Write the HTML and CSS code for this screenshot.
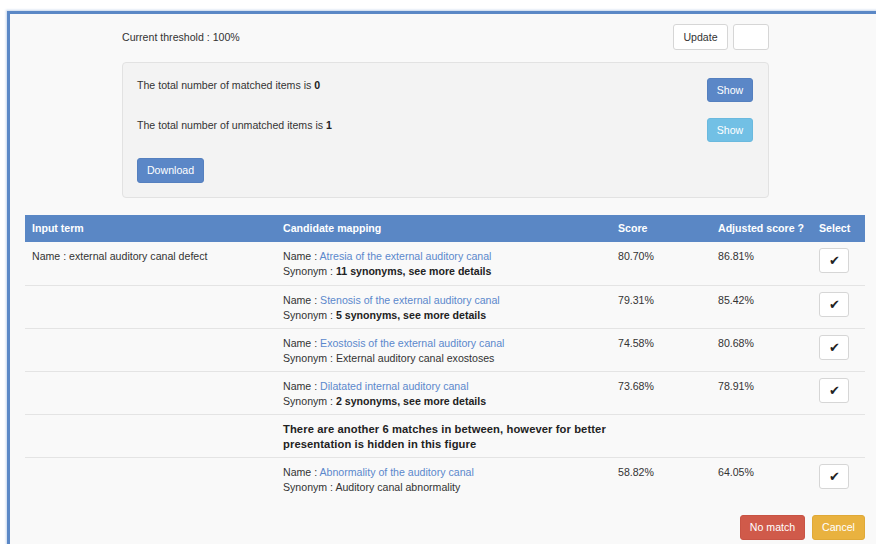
FILE: index.html
```html
<!DOCTYPE html>
<html>
<head>
<meta charset="utf-8">
<link rel="stylesheet" href="styles.css">
</head>
<body>
<div class="frame">
  <div class="top">
    <div class="threshold">
      <span>Current threshold : 100%</span>
      <div class="threshold-actions">
        <button class="btn btn-default btn-update">Update</button>
        <input class="threshold-input" type="text" value="">
      </div>
    </div>
    <div class="panel">
      <div class="panel-row">
        <span>The total number of matched items is <b>0</b></span>
        <button class="btn btn-primary btn-show">Show</button>
      </div>
      <div class="panel-row">
        <span>The total number of unmatched items is <b>1</b></span>
        <button class="btn btn-info btn-show">Show</button>
      </div>
      <div class="panel-row">
        <button class="btn btn-primary btn-download">Download</button>
      </div>
    </div>
  </div>

  <table class="results">
    <colgroup>
      <col class="c-input"><col class="c-cand"><col class="c-score"><col class="c-adj"><col class="c-sel">
    </colgroup>
    <thead>
      <tr><th>Input term</th><th>Candidate mapping</th><th>Score</th><th>Adjusted score ?</th><th>Select</th></tr>
    </thead>
    <tbody>
      <tr>
        <td>Name : external auditory canal defect</td>
        <td>Name : <a>Atresia of the external auditory canal</a><br>Synonym : <b>11 synonyms, see more details</b></td>
        <td>80.70%</td><td>86.81%</td>
        <td><button class="btn btn-default btn-check">&#10004;</button></td>
      </tr>
      <tr>
        <td></td>
        <td>Name : <a>Stenosis of the external auditory canal</a><br>Synonym : <b>5 synonyms, see more details</b></td>
        <td>79.31%</td><td>85.42%</td>
        <td><button class="btn btn-default btn-check">&#10004;</button></td>
      </tr>
      <tr>
        <td></td>
        <td>Name : <a>Exostosis of the external auditory canal</a><br>Synonym : External auditory canal exostoses</td>
        <td>74.58%</td><td>80.68%</td>
        <td><button class="btn btn-default btn-check">&#10004;</button></td>
      </tr>
      <tr>
        <td></td>
        <td>Name : <a>Dilatated internal auditory canal</a><br>Synonym : <b>2 synonyms, see more details</b></td>
        <td>73.68%</td><td>78.91%</td>
        <td><button class="btn btn-default btn-check">&#10004;</button></td>
      </tr>
      <tr class="note">
        <td></td>
        <td><b>There are another 6 matches in between, however for better<br>presentation is hidden in this figure</b></td>
        <td></td><td></td><td></td>
      </tr>
      <tr class="last">
        <td></td>
        <td>Name : <a>Abnormality of the auditory canal</a><br>Synonym : Auditory canal abnormality</td>
        <td>58.82%</td><td>64.05%</td>
        <td><button class="btn btn-default btn-check">&#10004;</button></td>
      </tr>
    </tbody>
  </table>

  <div class="footer">
    <button class="btn btn-danger">No match</button>
    <button class="btn btn-warning">Cancel</button>
  </div>
</div>
</body>
</html>
```

FILE: styles.css
```css
html, body {
  margin: 0;
  padding: 0;
  background: #ffffff;
  overflow: hidden;
}

body {
  font-family: "Liberation Sans", Arial, sans-serif;
  font-size: 10.6px;
  line-height: 15px;
  color: #333333;
}

.frame {
  margin: 11px 0 0 7px;
  width: 900px;
  height: 560px;
  border-top: 3px solid #5b88c6;
  border-left: 3px solid #5b88c6;
  background: #f9f9f9;
  box-shadow: -1px -1px 2px rgba(91, 136, 198, 0.35);
  box-sizing: border-box;
}

.top {
  margin-left: 112px;
  width: 647px;
  padding-top: 10px;
}

.threshold {
  display: flex;
  justify-content: space-between;
  align-items: center;
  height: 26px;
}

.threshold-actions {
  display: flex;
  gap: 5px;
}

.btn {
  font-family: inherit;
  font-size: 10.6px;
  line-height: 15px;
  border-radius: 3px;
  border: 1px solid transparent;
  padding: 0;
  cursor: pointer;
  box-sizing: border-box;
}

.btn-default {
  background: #ffffff;
  border-color: #d6d6d6;
  color: #333333;
}

.btn-update {
  width: 55px;
  height: 26px;
}

.threshold-input {
  width: 36px;
  height: 26px;
  box-sizing: border-box;
  border: 1px solid #d6d6d6;
  border-radius: 3px;
  background: #ffffff;
  margin: 0;
}

.panel {
  margin-top: 12px;
  height: 136px;
  box-sizing: border-box;
  background: #f3f3f3;
  border: 1px solid #e2e2e2;
  border-radius: 4px;
  padding: 15px 15px 0 14px;
  display: flex;
  flex-direction: column;
  gap: 16px;
}

.panel-row {
  display: flex;
  justify-content: space-between;
  align-items: flex-start;
}

.panel-row b {
  color: #222222;
}

.btn-primary {
  background: #5b87c7;
  border-color: #5580bf;
  color: #ffffff;
}

.btn-info {
  background: #72c0e5;
  border-color: #6ab9de;
  color: #ffffff;
}

.btn-show {
  width: 46px;
  height: 24px;
}

.btn-download {
  width: 67px;
  height: 25px;
}

.results {
  margin: 17px 0 0 15px;
  width: 840px;
  border-collapse: collapse;
  table-layout: fixed;
}

.c-input { width: 251px; }
.c-cand { width: 335px; }
.c-score { width: 100px; }
.c-adj { width: 101px; }
.c-sel { width: 53px; }

.results th {
  background: #5a87c5;
  color: #ffffff;
  font-weight: bold;
  text-align: left;
  white-space: nowrap;
  height: 27px;
  padding: 0 7px;
  box-sizing: border-box;
}

.results td {
  vertical-align: top;
  padding: 6px 7px 0 7px;
  height: 43px;
  box-sizing: border-box;
  border-bottom: 1px solid #e4e4e4;
  line-height: 15px;
}

.results td:not(:last-child) {
  padding-top: 7px;
}

.results tr.last td {
  border-bottom: none;
}

.results tr.note td {
  overflow: visible;
}

.results tr.note b {
  font-size: 11.2px;
  letter-spacing: 0.1px;
  white-space: nowrap;
}

.results td a {
  color: #5b88cc;
}

.results td b {
  color: #222222;
}

.btn-check {
  width: 30px;
  height: 25px;
  font-size: 13px;
  color: #222222;
}

.footer {
  display: flex;
  justify-content: flex-end;
  gap: 7px;
  width: 855px;
  margin-top: 15px;
}

.btn-danger {
  background: #d05a4a;
  border-color: #c85344;
  color: #ffffff;
  width: 65px;
  height: 25px;
}

.btn-warning {
  background: #e9b23f;
  border-color: #e0a937;
  color: #ffffff;
  width: 53px;
  height: 25px;
}
```
